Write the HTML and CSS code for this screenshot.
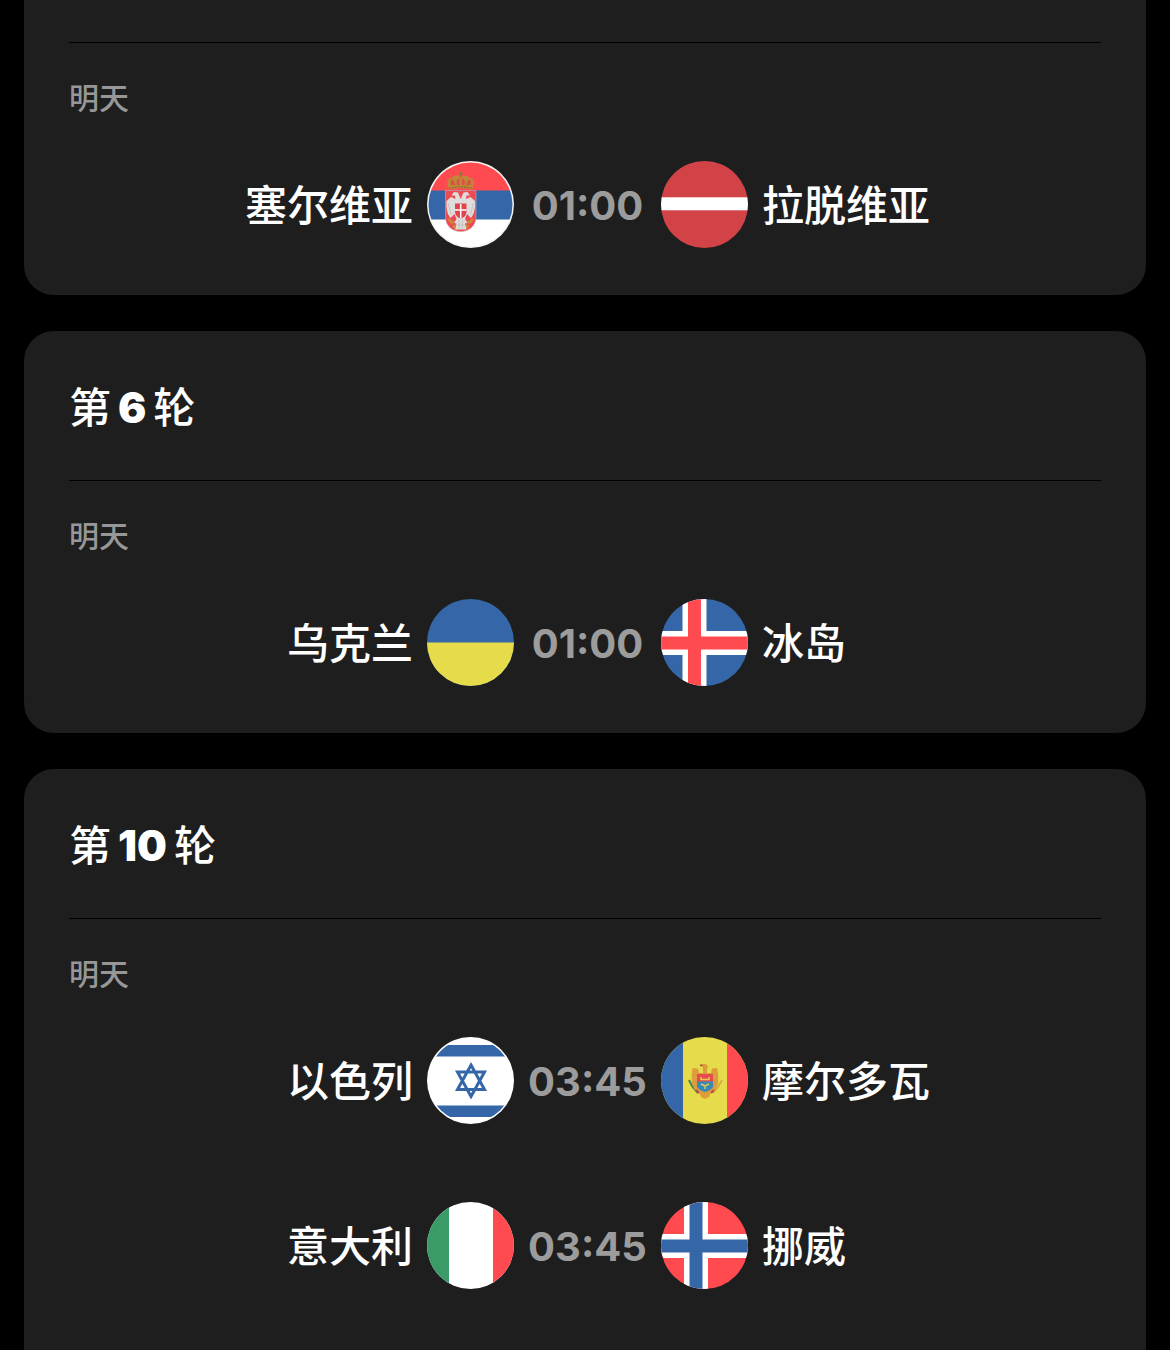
FILE: index.html
```html
<!DOCTYPE html>
<html lang="zh-CN">
<head>
<meta charset="utf-8">
<meta name="viewport" content="width=device-width, initial-scale=1">
<title>赛程</title>
<link rel="stylesheet" href="styles.css">
</head>
<body>
<main class="rounds">
  <section class="round round-first">
    <div class="day">
      <h3 class="day-label">明天</h3>
      <ul class="matches">
        <li class="match">
          <span class="team team-home">塞尔维亚</span>
          <svg class="flag" viewBox="0 0 87 87" aria-hidden="true">
            <defs><clipPath id="rim"><circle cx="43.5" cy="43.5" r="42"/></clipPath></defs>
            <rect width="87" height="87" fill="#f4f4f4"/>
            <g clip-path="url(#rim)">
              <rect width="87" height="87" fill="#fff"/>
              <rect width="87" height="30" fill="#ff4b50"/>
              <rect y="29.500" width="87" height="29" fill="#3466a8"/>
            </g>
            <path d="M18.500 29.500H49V56C49 65 42 70.500 33.700 70.500S18.500 65 18.500 56Z" fill="#ee4a52" stroke="#c9a9b4" stroke-width=".6"/>
            <path d="M33.700 38L31 31.500 27 31 24.500 34.500 28 34.500 28.500 38 24 36 19.500 40C19 46 20 53 23.500 57L27.500 53 29.500 58 27 62 29.500 62.500 28 68.500H39.500L38 62.500 40.500 62 38 58 40 53 44 57C47.500 53 48.500 46 48 40L43.500 36 39 38 39.500 34.500 43 34.500 40.500 31 36.500 31.500Z" fill="#dfdcdc"/>
            <path d="M21 42L24 53M46.500 42L43.500 53M32 59V68M35.500 59V68M30 64H37.500" stroke="#bcb8bc" stroke-width=".7" fill="none"/>
            <path d="M28 42.500H39.500V51Q39 56 33.700 57.500Q28.500 56 28 51Z" fill="#e4434c"/>
            <path d="M33.700 43V57M28 49H39.500" stroke="#fff" stroke-width="1.500"/>
            <path d="M20.500 58L23 57.500 25 60 27.500 60 26 63 23 62ZM47 58L44.500 57.500 42.500 60 40 60 41.500 63 44.500 62ZM25 65L29 63 28 68ZM42.500 65L38.500 63 39.500 68Z" fill="#cc8b35"/>
            <path d="M22 28.500L20.500 23Q19.500 18 24.500 17Q27 14 31 14.500L33.700 16.500 36.500 14.500Q40 14 43 17Q48 18 47 23L45 28.500Q33.700 25.500 22 28.500Z" fill="#be8836"/>
            <path d="M24 24Q22.500 19 26 18.500L28.500 24ZM30 24Q28.500 18 32.500 17.500V24ZM37.500 24Q39 18 35 17.500V24ZM43.500 24Q45 19 41.500 18.500L39 24Z" fill="#db5145"/>
            <path d="M33.700 10.700V15.500M31.700 12.500H35.700" stroke="#8f752e" stroke-width="1.400"/>
            <path d="M22 27.500Q33.700 24 45.500 27.500" stroke="#8c6734" stroke-width="1.200" stroke-dasharray="2 1" fill="none"/>
          </svg>
          <time class="kickoff">01:00</time>
          <svg class="flag" viewBox="0 0 87 87" aria-hidden="true">
            <rect width="87" height="87" fill="#d24347"/>
            <rect y="36.300" width="87" height="13" fill="#fff"/>
          </svg>
          <span class="team">拉脱维亚</span>
        </li>
      </ul>
    </div>
  </section>

  <section class="round">
    <h2 class="round-title">第<span class="round-number">6</span>轮</h2>
    <div class="day">
      <h3 class="day-label">明天</h3>
      <ul class="matches">
        <li class="match">
          <span class="team team-home">乌克兰</span>
          <svg class="flag" viewBox="0 0 87 87" aria-hidden="true">
            <rect width="87" height="87" fill="#3466a8"/>
            <rect y="43.500" width="87" height="43.500" fill="#e6dc4b"/>
          </svg>
          <time class="kickoff">01:00</time>
          <svg class="flag" viewBox="0 0 87 87" aria-hidden="true">
            <rect width="87" height="87" fill="#3466a8"/>
            <path d="M33.500 0V87M0 44H87" stroke="#fff" stroke-width="24"/>
            <path d="M33.500 0V87M0 44H87" stroke="#ff4b50" stroke-width="13"/>
          </svg>
          <span class="team">冰岛</span>
        </li>
      </ul>
    </div>
  </section>

  <section class="round round-last">
    <h2 class="round-title">第<span class="round-number">10</span>轮</h2>
    <div class="day">
      <h3 class="day-label">明天</h3>
      <ul class="matches">
        <li class="match">
          <span class="team team-home">以色列</span>
          <svg class="flag" viewBox="0 0 87 87" aria-hidden="true">
            <rect width="87" height="87" fill="#fff"/>
            <g clip-path="url(#rim)" fill="#3466a8">
              <rect y="8" width="87" height="11.500"/>
              <rect y="68.500" width="87" height="11.500"/>
            </g>
            <path d="M44 28L57.500 52.500H30.500ZM44 59.500L57.500 35H30.500Z" fill="none" stroke="#3466a8" stroke-width="3"/>
          </svg>
          <time class="kickoff">03:45</time>
          <svg class="flag" viewBox="0 0 87 87" aria-hidden="true">
            <rect width="87" height="87" fill="#e6dc4b"/>
            <rect width="22" height="87" fill="#3466a8"/>
            <rect x="66" width="21" height="87" fill="#ff4b50"/>
            <path d="M28 43L31 49 37 56" stroke="#39835a" stroke-width="2" fill="none"/>
            <path d="M61 43L57 50 52 56" stroke="#d5a844" stroke-width="1.600" fill="none"/>
            <path d="M42 36V31L39.500 28.500 42.500 27Q46 26.500 47 29L46 33V36L50 36 51 31.500 56 31Q58 38 57 47L54 53 50 55 48 60 44 62 40 60 38 55 34 53 31 47Q30 38 31.500 31L37 31.500 38 36Z" fill="#dc9d3b"/>
            <path d="M36 37H52V46H36Z" fill="#e74b50"/>
            <path d="M36 44.500H52V50Q49 54 44 55Q39 54 36 50Z" fill="#368ab5"/>
            <path d="M40 40V42.500H48V40M40 47L44 49 48 47M44 49V52" stroke="#e4c94c" stroke-width="1.500" fill="none"/>
            <path d="M35 53L38 56M53 53L50 56" stroke="#c34843" stroke-width="2"/>
            <path d="M39 28.500L41.500 28" stroke="#9d5034" stroke-width="1.500"/>
          </svg>
          <span class="team">摩尔多瓦</span>
        </li>
        <li class="match">
          <span class="team team-home">意大利</span>
          <svg class="flag" viewBox="0 0 87 87" aria-hidden="true">
            <rect width="87" height="87" fill="#fff"/>
            <rect width="22" height="87" fill="#3b9b68"/>
            <rect x="66" width="21" height="87" fill="#ff4b50"/>
          </svg>
          <time class="kickoff">03:45</time>
          <svg class="flag" viewBox="0 0 87 87" aria-hidden="true">
            <rect width="87" height="87" fill="#ff4b50"/>
            <path d="M35 0V87M0 44H87" stroke="#fff" stroke-width="24"/>
            <path d="M35 0V87M0 44H87" stroke="#3466a8" stroke-width="13"/>
          </svg>
          <span class="team">挪威</span>
        </li>
      </ul>
    </div>
  </section>
</main>
</body>
</html>
```
FILE: styles.css
```css
* {
  box-sizing: border-box;
}

body {
  margin: 0;
  background: #000;
  color: #fff;
  font-family: Inter, "Noto Sans CJK SC", sans-serif;
}

.rounds {
  display: flex;
  flex-direction: column;
  gap: 36px;
  min-height: 100vh;
  padding: 0 24px;
}

.round {
  padding: 0 45px 47px;
  border-radius: 30px;
  background: #1e1e1e;
}

.round-first {
  padding-top: 42px;
  border-radius: 0 0 30px 30px;
}

.round-last {
  flex-grow: 1;
  border-radius: 30px 30px 0 0;
}

.round-title {
  margin: 0;
  padding: 47px 0 42px;
  font-size: 42px;
  font-weight: 500;
  line-height: 60px;
}

.round-number {
  margin: 0 7px;
  font-weight: 900;
}

.day {
  padding-top: 33px;
  border-top: 1px solid #000;
}

.day-label {
  margin: 0;
  color: #979797;
  font-size: 30px;
  font-weight: 500;
  line-height: 44px;
}

.matches {
  display: flex;
  flex-direction: column;
  gap: 78px;
  margin: 0;
  padding: 41px 0 0 5px;
  list-style: none;
}

.match {
  display: grid;
  grid-template-columns: 1fr 87px 147px 87px 1fr;
  align-items: center;
}

.team {
  padding: 3px 14px 0;
  font-size: 42px;
  font-weight: 500;
  line-height: 60px;
  white-space: nowrap;
}

.team-home {
  text-align: right;
}

.flag {
  display: block;
  width: 87px;
  height: 87px;
  border-radius: 50%;
}

.kickoff {
  padding-top: 2px;
  color: #9c9c9c;
  font-size: 40px;
  font-weight: 700;
  font-feature-settings: "case";
  line-height: 60px;
  text-align: center;
}
```
